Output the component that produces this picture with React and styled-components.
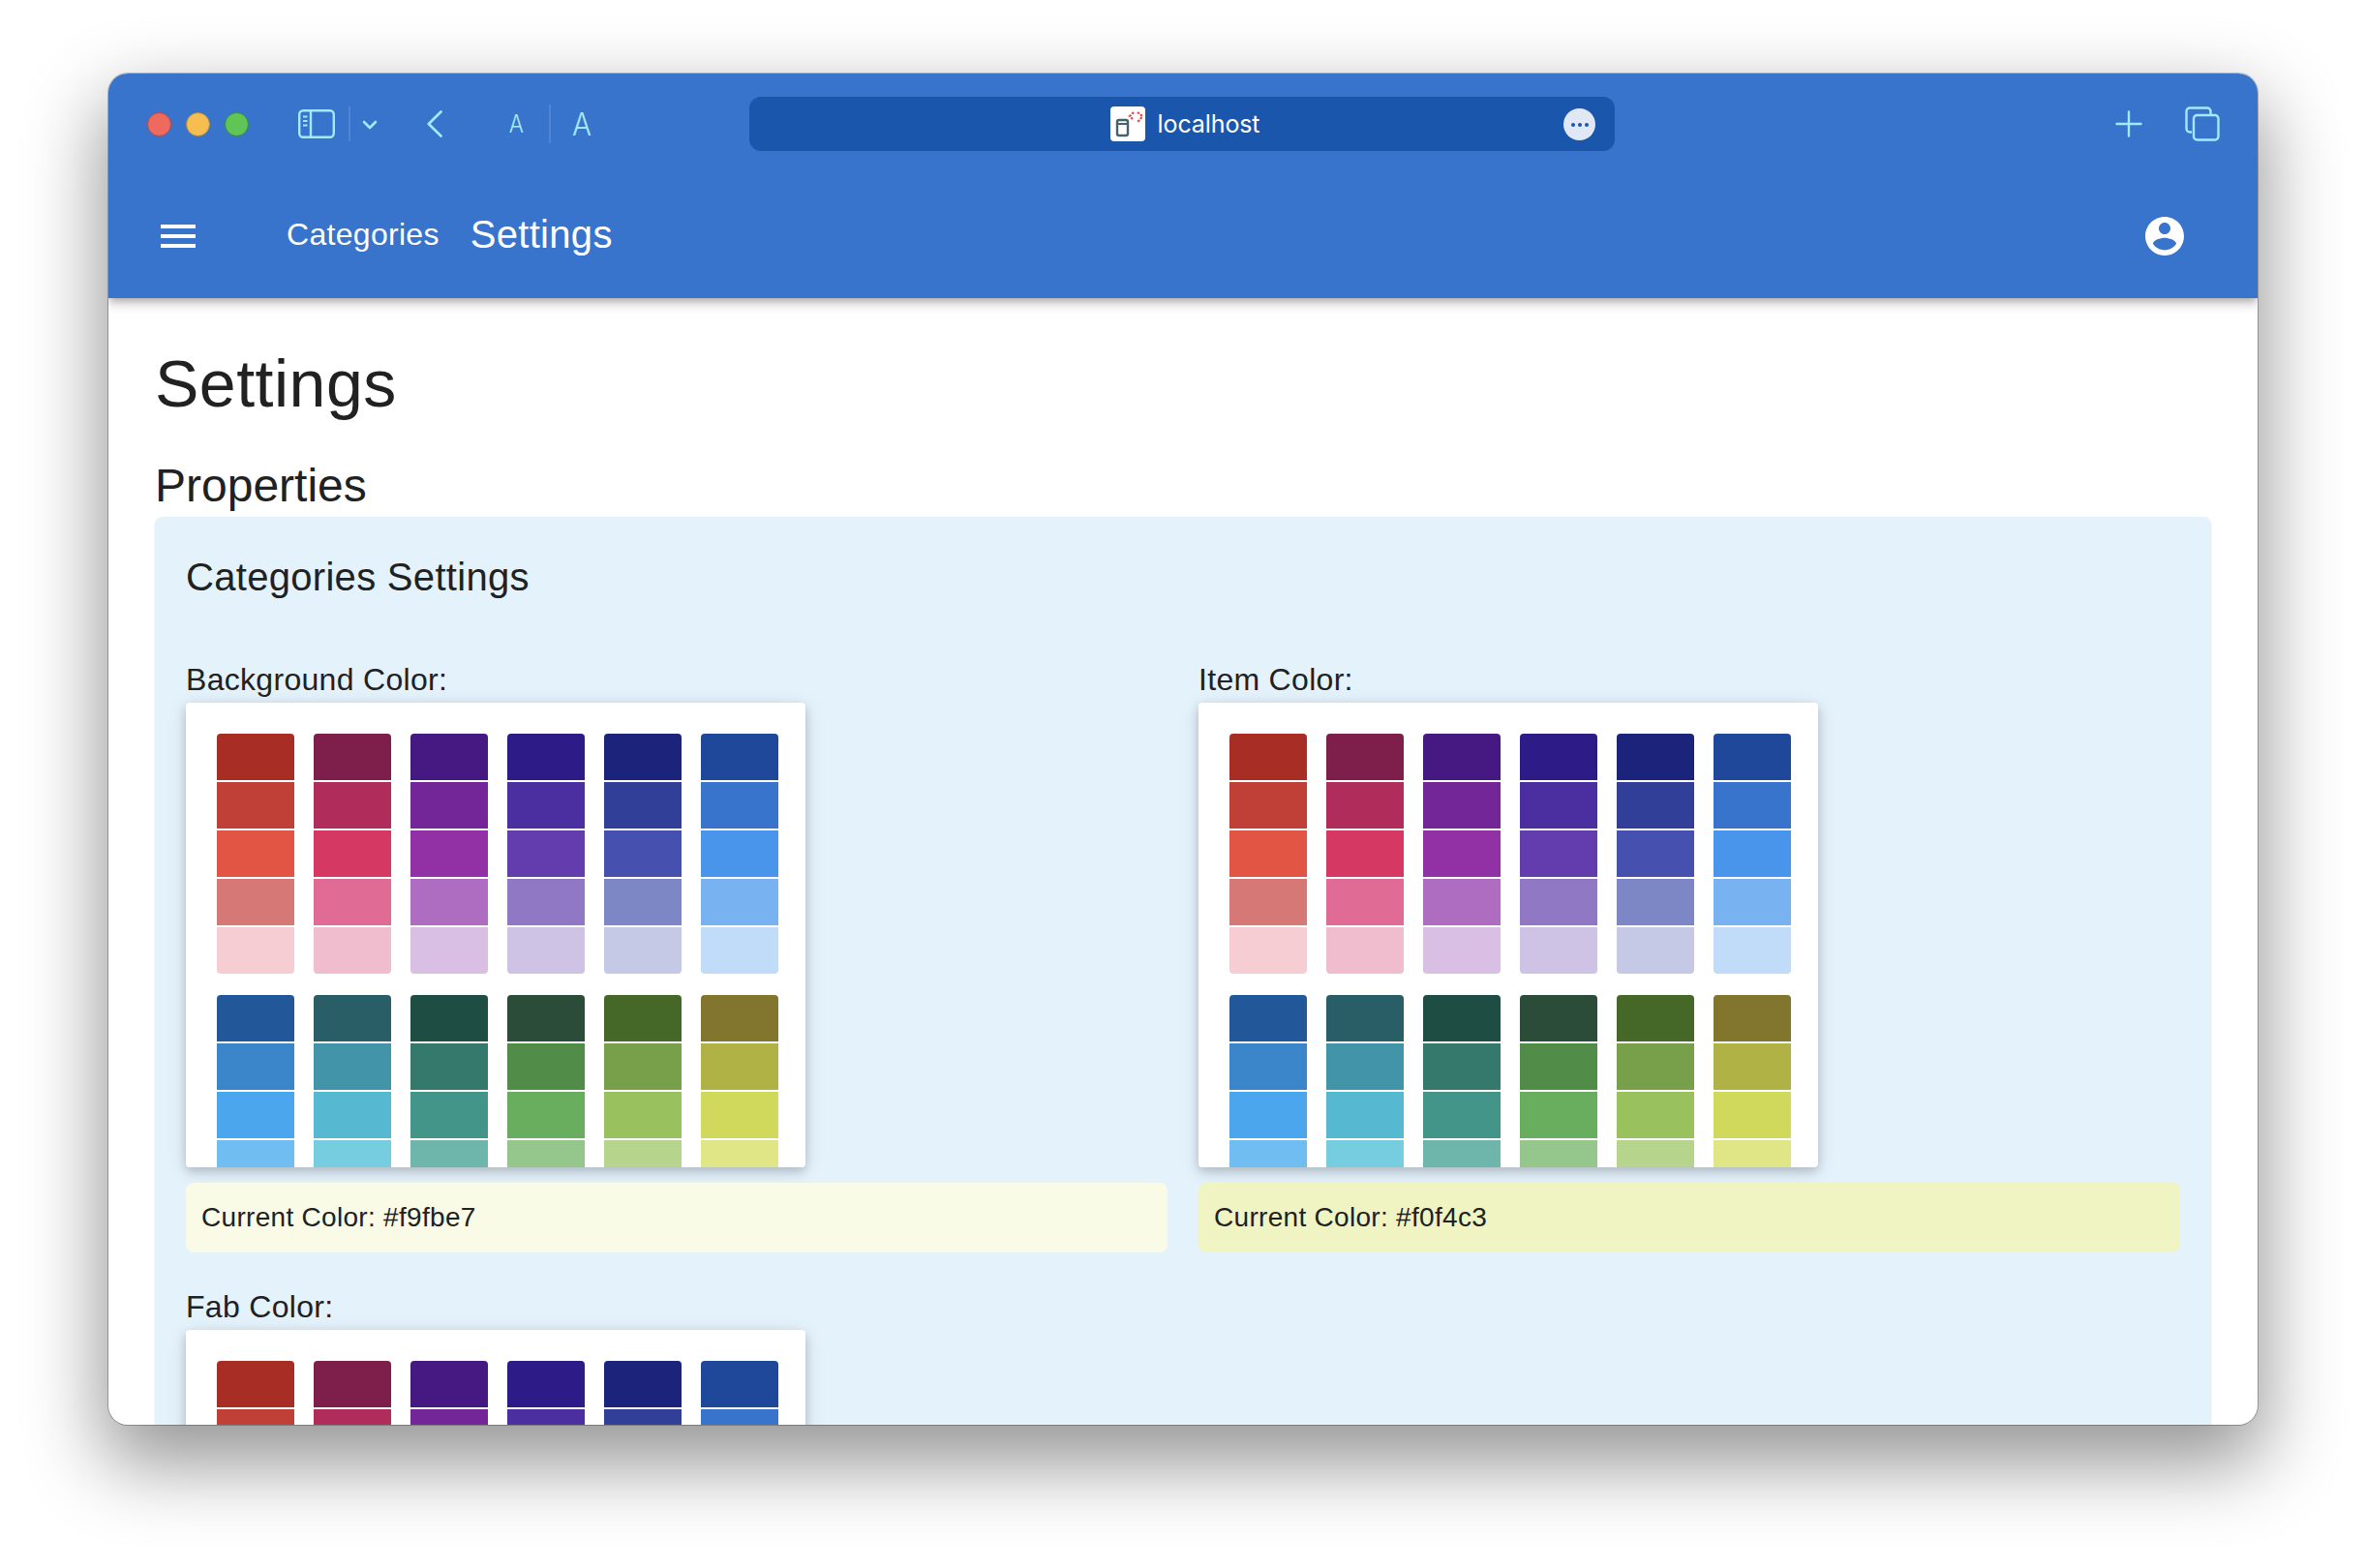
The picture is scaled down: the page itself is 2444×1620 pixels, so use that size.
import React from 'react';
import styled, { createGlobalStyle } from 'styled-components';

const Global = createGlobalStyle`
  html, body { margin: 0; padding: 0; background: #fff; }
  * { box-sizing: border-box; }
`;

const Desk = styled.div`
  width: 2444px;
  height: 1620px;
  padding: 76px 112px 148px;
  background: #fff;
  overflow: hidden;
  font-family: "Liberation Sans", Arial, sans-serif;
`;
const Win = styled.div`
  height: 100%;
  border-radius: 20px;
  overflow: hidden;
  display: flex;
  flex-direction: column;
  background: #fff;
  box-shadow: 0 0 0 1px rgba(0,0,0,.25), 0 34px 80px 6px rgba(0,0,0,.42);
`;
const Head = styled.header`
  flex: none;
  background: #3873cc;
  color: #fff;
  box-shadow: 0 4px 8px -2px rgba(0,0,0,.3), 0 8px 10px 1px rgba(0,0,0,.1);
  position: relative;
  z-index: 1;
`;
const TitleBar = styled.div`
  height: 104px;
  display: flex;
  align-items: center;
  padding: 0 39px 0 39.5px;
  color: #a6e9ff;
`;
const Lights = styled.div`
  display: flex;
  gap: 15px;
  margin-right: 51.5px;
`;
const Light = styled.span`
  width: 25px;
  height: 25px;
  border-radius: 50%;
  background: ${p => p.$c};
  border: 1px solid ${p => p.$b};
`;
const Divider = styled.span`
  width: 2px;
  height: ${p => p.$h}px;
  background: rgba(255,255,255,.13);
  margin: ${p => p.$m};
`;
const ToolIcon = styled.svg`
  display: block;
  flex: none;
  margin: ${p => p.$m || 0};
`;
const FontA = styled.span`
  font-family: Inter, "Liberation Sans", Arial, sans-serif;
  font-weight: 300;
  font-size: ${p => p.$s}px;
  line-height: 1;
  margin: ${p => p.$m};
  transform: scaleX(.9);
`;
const Address = styled.div`
  position: absolute;
  left: 662px;
  top: 24px;
  width: 894px;
  height: 56px;
  padding-left: 6px;
  border-radius: 12px;
  background: #1b56ad;
  display: flex;
  align-items: center;
  justify-content: center;
  color: #fff;
`;
const Favicon = styled.span`
  width: 36px;
  height: 36px;
  border-radius: 4px;
  background: #fff;
  margin-right: 13px;
  display: flex;
`;
const Host = styled.span`
  font-family: Inter, "Liberation Sans", Arial, sans-serif;
  font-size: 25px;
  letter-spacing: -.1px;
`;
const MoreBtn = styled.span`
  position: absolute;
  right: 20px;
  top: 12px;
  width: 33px;
  height: 33px;
  border-radius: 50%;
  background: #dfe8f4;
  display: flex;
  align-items: center;
  justify-content: center;
  gap: 3px;
`;
const Dot = styled.i`
  width: 4px;
  height: 4px;
  border-radius: 50%;
  background: #1b56ad;
`;
const Spacer = styled.div`
  flex: 1;
`;
const AppBar = styled.nav`
  height: 128px;
  display: flex;
  align-items: center;
  padding: 0 72px 0 48px;
`;
const NavLink = styled.a`
  font-size: ${p => p.$s}px;
  letter-spacing: .3px;
  margin-left: ${p => p.$ml}px;
  padding-bottom: 4px;
  color: #fff;
`;
const Main = styled.main`
  flex: 1;
  min-height: 0;
  overflow: hidden;
  padding: 46px 48px 0 48px;
  color: #212121;
`;
const H1 = styled.h1`
  margin: 0 0 32px;
  font-weight: 400;
  font-size: 68px;
  line-height: 84px;
  letter-spacing: .5px;
`;
const H2 = styled.h2`
  margin: 0;
  font-weight: 400;
  font-size: 48px;
  line-height: 64px;
`;
const Panel = styled.section`
  background: #e4f2fc;
  border-radius: 8px;
  padding: 32px;
  box-shadow: 0 2px 2px -1px rgba(0,0,0,.12), 0 1px 3px 0 rgba(0,0,0,.08);
`;
const PanelTitle = styled.h3`
  margin: 0 0 48px;
  font-weight: 400;
  font-size: 40px;
  line-height: 60px;
  padding-bottom: 4px;
  letter-spacing: .3px;
`;
const Grid = styled.div`
  display: grid;
  grid-template-columns: 1fr 1fr;
  gap: 32px;
`;
const Field = styled.div`
  min-width: 0;
`;
const Label = styled.div`
  font-size: 32px;
  line-height: 48px;
  letter-spacing: .3px;
`;
const Picker = styled.div`
  width: 640px;
  height: 480px;
  background: #fff;
  border-radius: 4px;
  overflow: hidden;
  padding: 32px 28px 0 32px;
  box-shadow: 0 4px 20px rgba(0,0,0,.12), 0 4px 10px rgba(0,0,0,.16);
  display: grid;
  grid-template-columns: repeat(6, 80px);
  grid-auto-rows: max-content;
  column-gap: 20px;
  row-gap: 22px;
  align-content: start;
`;
const SwatchGroup = styled.div`
  display: flex;
  flex-direction: column;
  gap: 2px;
  border-radius: 4px;
  overflow: hidden;
`;
const Swatch = styled.div`
  height: 48px;
  flex: none;
  background: ${p => p.$c};
`;
const Current = styled.div`
  margin-top: 16px;
  height: 72px;
  padding: 16px;
  border-radius: 8px;
  background: ${p => p.$c};
  font-size: 28px;
  line-height: 40px;
  letter-spacing: .3px;
`;

const groups = [
  ['#a82d24', '#c03f36', '#e25443', '#d67875', '#f6cdd3'],
  ['#7e1e4a', '#b02c5b', '#d63864', '#e06b94', '#f0bdcf'],
  ['#461881', '#722698', '#9230a5', '#ae6dc0', '#dabfe4'],
  ['#2d1c87', '#4b2fa0', '#633cae', '#9178c4', '#cfc3e5'],
  ['#1b237a', '#323f98', '#4650ae', '#7e87c5', '#c6c9e6'],
  ['#1f479a', '#3873cc', '#4a95ec', '#79b2f0', '#c1dcf8'],
  ['#22589a', '#3b85ca', '#4ba6ee', '#70bdf2', '#b9dcf8'],
  ['#295e66', '#4295a8', '#56b8d1', '#76cddf', '#b8e5ee'],
  ['#1e4d43', '#35786c', '#43958a', '#6eb5ac', '#b4dbd6'],
  ['#2a4c39', '#518c48', '#69ad5e', '#95c68c', '#cbe3c7'],
  ['#456829', '#789f49', '#99c15e', '#b6d48c', '#dbeac5'],
  ['#82752d', '#b0b246', '#d0d95b', '#e0e685', '#f0f4c3'],
];

const ColorPicker = () => (
  <Picker>
    {groups.map((g, i) => (
      <SwatchGroup key={i}>
        {g.map(c => <Swatch key={c} $c={c} />)}
      </SwatchGroup>
    ))}
  </Picker>
);

export default function App() {
  return (
    <Desk>
      <Global />
      <Win>
        <Head>
          <TitleBar>
            <Lights>
              <Light $c="#ee6a5f" $b="#b84a44" />
              <Light $c="#f6bd4f" $b="#a88a45" />
              <Light $c="#61c555" $b="#3c8a44" />
            </Lights>
            <ToolIcon width="38" height="30" viewBox="0 0 38 30" fill="none" stroke="currentColor" strokeWidth="2.4">
              <rect x="1.2" y="1.2" width="35.6" height="27.6" rx="4" />
              <path d="M13 1.2v27.6" />
              <path d="M5 7.500h4.500M5 12h4.500M5 16.500h4.500" strokeWidth="2" />
            </ToolIcon>
            <Divider $h={36} $m="0 12px 0 14px" />
            <ToolIcon width="16" height="10" viewBox="0 0 16 10" fill="none" stroke="currentColor" strokeWidth="2.6" strokeLinecap="round" strokeLinejoin="round" $m="2px 0 0 0">
              <path d="M2 2l6 6 6-6" />
            </ToolIcon>
            <ToolIcon width="16" height="28" viewBox="0 0 16 28" fill="none" stroke="currentColor" strokeWidth="2.6" strokeLinecap="round" strokeLinejoin="round" $m="0 0 0 51px">
              <path d="M14.500 1.500L1.800 14l12.700 12.500" />
            </ToolIcon>
            <FontA $s={25} $m="0 25px 0 68px">A</FontA>
            <Divider $h={40} $m="0 21px 0 0" />
            <FontA $s={33} $m="0">A</FontA>
            <Address>
              <Favicon>
                <svg width="36" height="36" viewBox="0 0 36 36" fill="none">
                  <rect x="7" y="14" width="11" height="16" rx="2" stroke="#47606e" strokeWidth="2.400" />
                  <path d="M7 18h11" stroke="#47606e" strokeWidth="2" />
                  <path d="M24 6l-4 4 3 3M28 6l5 4-2 3-3 3" stroke="#e8453c" strokeWidth="2.200" strokeDasharray="2.400 1.400" />
                </svg>
              </Favicon>
              <Host>localhost</Host>
              <MoreBtn><Dot /><Dot /><Dot /></MoreBtn>
            </Address>
            <Spacer />
            <ToolIcon width="28" height="28" viewBox="0 0 28 28" fill="none" stroke="currentColor" strokeWidth="2.4" strokeLinecap="round" $m="0 0 0 0">
              <path d="M14 1.500v25M1.500 14h25" />
            </ToolIcon>
            <ToolIcon width="36" height="36" viewBox="0 0 36 36" fill="none" stroke="currentColor" strokeWidth="2.4" $m="0 0 0 44px">
              <path d="M7 26.500H5a3.500 3.500 0 0 1-3.500-3.500V5A3.500 3.500 0 0 1 5 1.500h18A3.500 3.500 0 0 1 26.500 5v3" />
              <rect x="9" y="9" width="25.500" height="25.500" rx="3.500" />
            </ToolIcon>
          </TitleBar>
          <AppBar>
            <ToolIcon width="48" height="48" viewBox="0 0 24 24" fill="#fff">
              <path d="M3 18h18v-2H3v2zm0-5h18v-2H3v2zm0-7v2h18V6H3z" />
            </ToolIcon>
            <NavLink $s={32} $ml={88}>Categories</NavLink>
            <NavLink $s={40} $ml={32}>Settings</NavLink>
            <Spacer />
            <ToolIcon width="48" height="48" viewBox="0 0 24 24" fill="#fff">
              <path d="M12 2C6.480 2 2 6.480 2 12s4.480 10 10 10 10-4.480 10-10S17.520 2 12 2zm0 3c1.660 0 3 1.340 3 3s-1.340 3-3 3-3-1.340-3-3 1.340-3 3-3zm0 14.200c-2.500 0-4.710-1.280-6-3.220.03-1.990 4-3.080 6-3.080 1.990 0 5.970 1.090 6 3.080-1.290 1.940-3.500 3.220-6 3.220z" />
            </ToolIcon>
          </AppBar>
        </Head>
        <Main>
          <H1>Settings</H1>
          <H2>Properties</H2>
          <Panel>
            <PanelTitle>Categories Settings</PanelTitle>
            <Grid>
              <Field>
                <Label>Background Color:</Label>
                <ColorPicker />
                <Current $c="#f9fbe7">Current Color: #f9fbe7</Current>
              </Field>
              <Field>
                <Label>Item Color:</Label>
                <ColorPicker />
                <Current $c="#f0f4c3">Current Color: #f0f4c3</Current>
              </Field>
              <Field>
                <Label>Fab Color:</Label>
                <ColorPicker />
              </Field>
            </Grid>
          </Panel>
        </Main>
      </Win>
    </Desk>
  );
}
